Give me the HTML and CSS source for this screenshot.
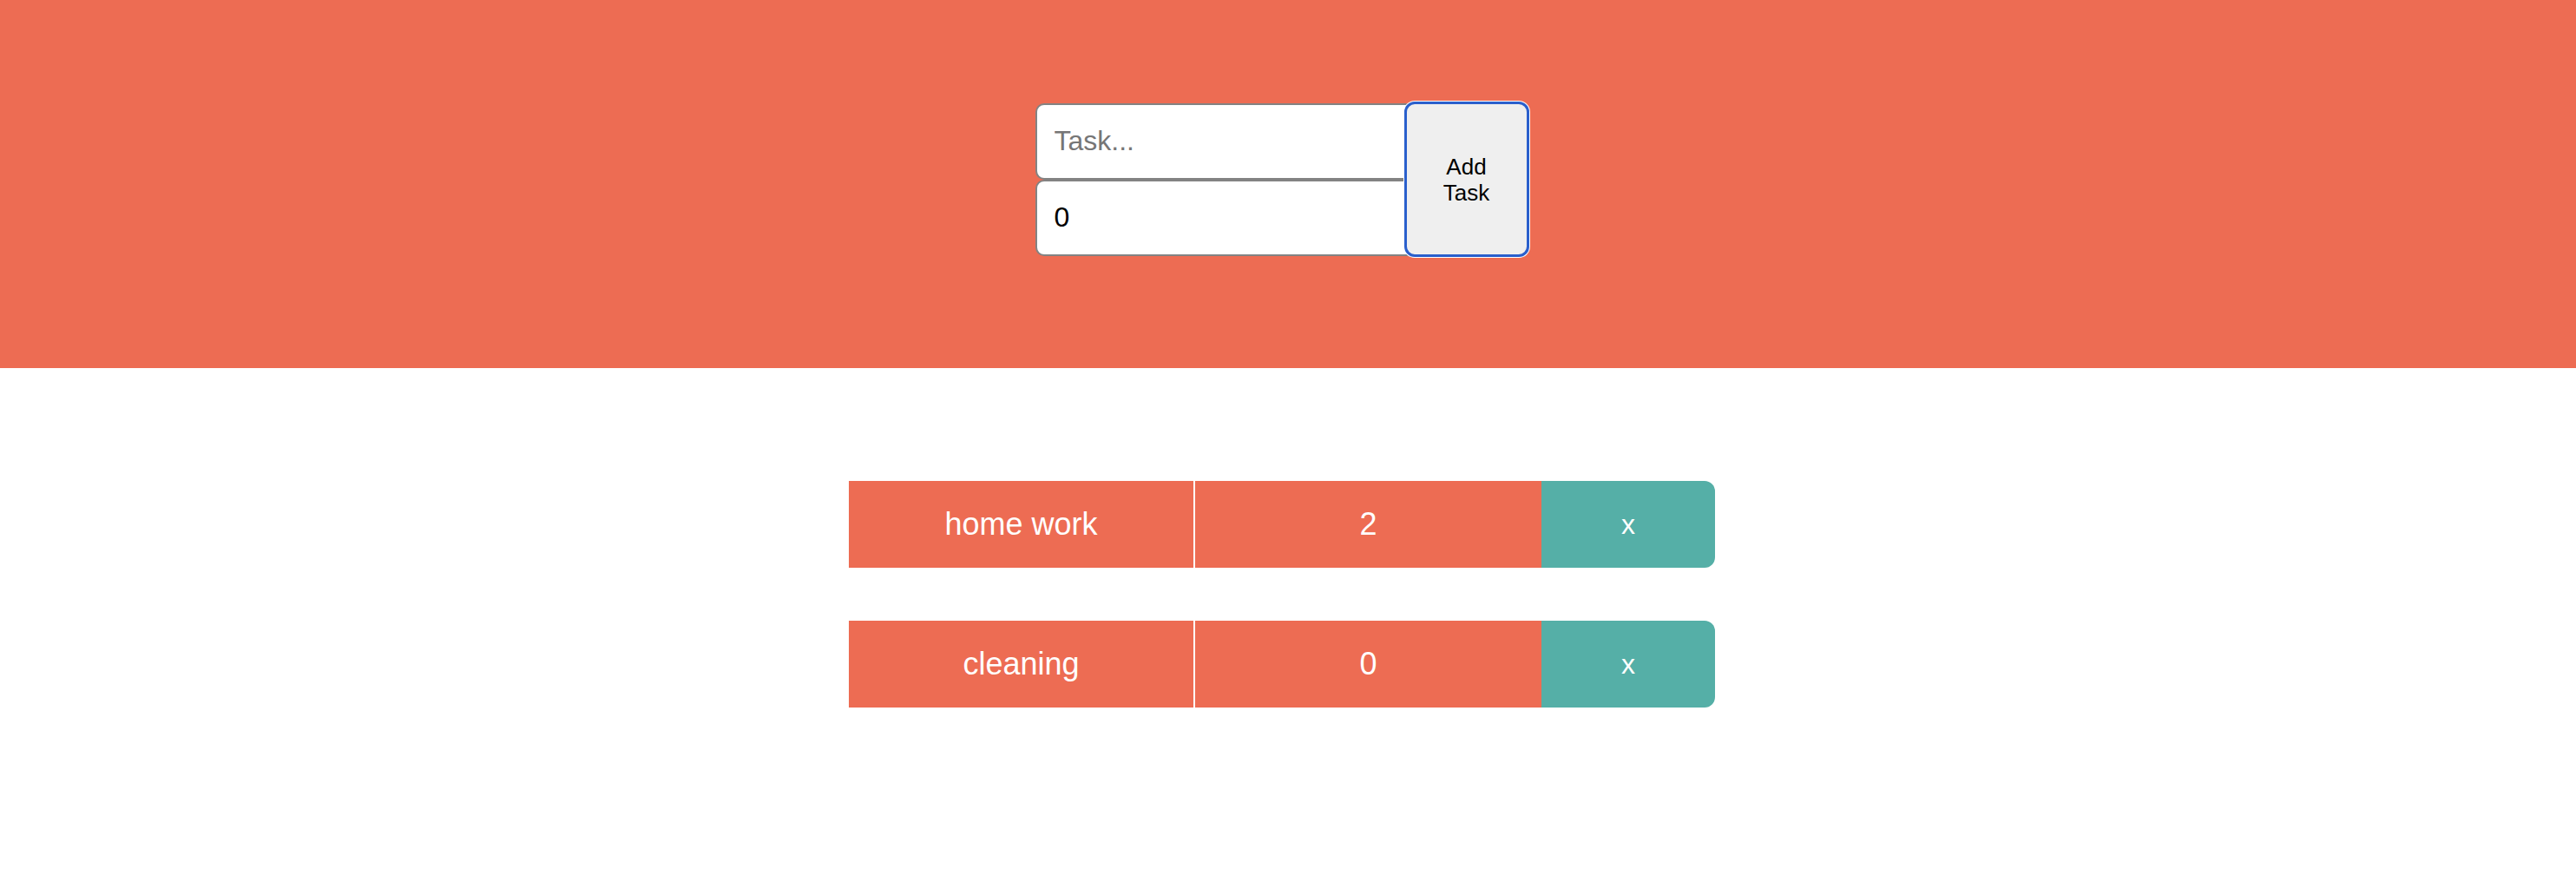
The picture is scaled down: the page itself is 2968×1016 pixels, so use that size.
FILE: index.html
```html
<!DOCTYPE html>
<html lang="en">
<head>
<meta charset="utf-8">
<title>Tasks</title>
<link rel="stylesheet" href="styles.css">
</head>
<body>
<div class="page">
  <header class="header">
    <form class="task-form">
      <div class="fields">
        <input class="field" type="text" placeholder="Task...">
        <input class="field" type="number" value="0">
      </div>
      <button class="add-btn" type="button">Add<br>Task</button>
    </form>
  </header>
  <main class="list">
    <div class="task-row">
      <div class="cell cell-name">home work</div>
      <div class="cell cell-count">2</div>
      <div class="cell cell-remove">x</div>
    </div>
    <div class="task-row">
      <div class="cell cell-name">cleaning</div>
      <div class="cell cell-count">0</div>
      <div class="cell cell-remove">x</div>
    </div>
  </main>
</div>
</body>
</html>
```
FILE: styles.css
```css
html, body {
  margin: 0;
  padding: 0;
  background: #ffffff;
  font-family: "Liberation Sans", Arial, sans-serif;
}

.page {
  padding-right: 14px;
}

.header {
  background: #ed6c53;
  height: 424px;
  box-sizing: border-box;
  padding-top: 117px;
  display: flex;
  justify-content: center;
  margin-right: -14px;
  padding-right: 14px;
}

.task-form {
  display: flex;
  align-items: center;
  height: 179px;
  margin: 0;
}

.fields {
  display: flex;
  flex-direction: column;
  width: 440px;
}

.field {
  box-sizing: border-box;
  width: 440px;
  height: 88px;
  margin: 0;
  border: 2px solid #838383;
  border-radius: 10px;
  background: #ffffff;
  padding: 0 20px;
  font-family: "Liberation Sans", Arial, sans-serif;
  font-size: 32px;
  color: #000000;
  outline: none;
  -moz-appearance: textfield;
}

.field::placeholder {
  color: #767676;
}

.field::-webkit-outer-spin-button,
.field::-webkit-inner-spin-button {
  -webkit-appearance: none;
  margin: 0;
}

.add-btn {
  box-sizing: border-box;
  width: 144px;
  height: 179px;
  margin: 0 0 0 -15px;
  border: 3px solid #2a5fcc;
  border-radius: 12px;
  background: #efefef;
  box-shadow: 0 0 0 1px #ffffff;
  font-family: "Liberation Sans", Arial, sans-serif;
  font-size: 26px;
  line-height: 30px;
  color: #000000;
  padding: 0;
}

.list {
  display: flex;
  flex-direction: column;
  align-items: center;
  gap: 61px;
  padding-top: 130px;
}

.task-row {
  display: flex;
  width: 998px;
  height: 100px;
}

.cell {
  display: flex;
  align-items: center;
  justify-content: center;
  color: #ffffff;
  font-size: 36px;
  box-sizing: border-box;
}

.cell-name {
  width: 399px;
  background: #ed6c53;
  border-right: 2px solid #ffffff;
}

.cell-count {
  width: 399px;
  background: #ed6c53;
}

.cell-remove {
  width: 200px;
  background: #55afa7;
  border-radius: 0 12px 12px 0;
  font-size: 32px;
}
```
